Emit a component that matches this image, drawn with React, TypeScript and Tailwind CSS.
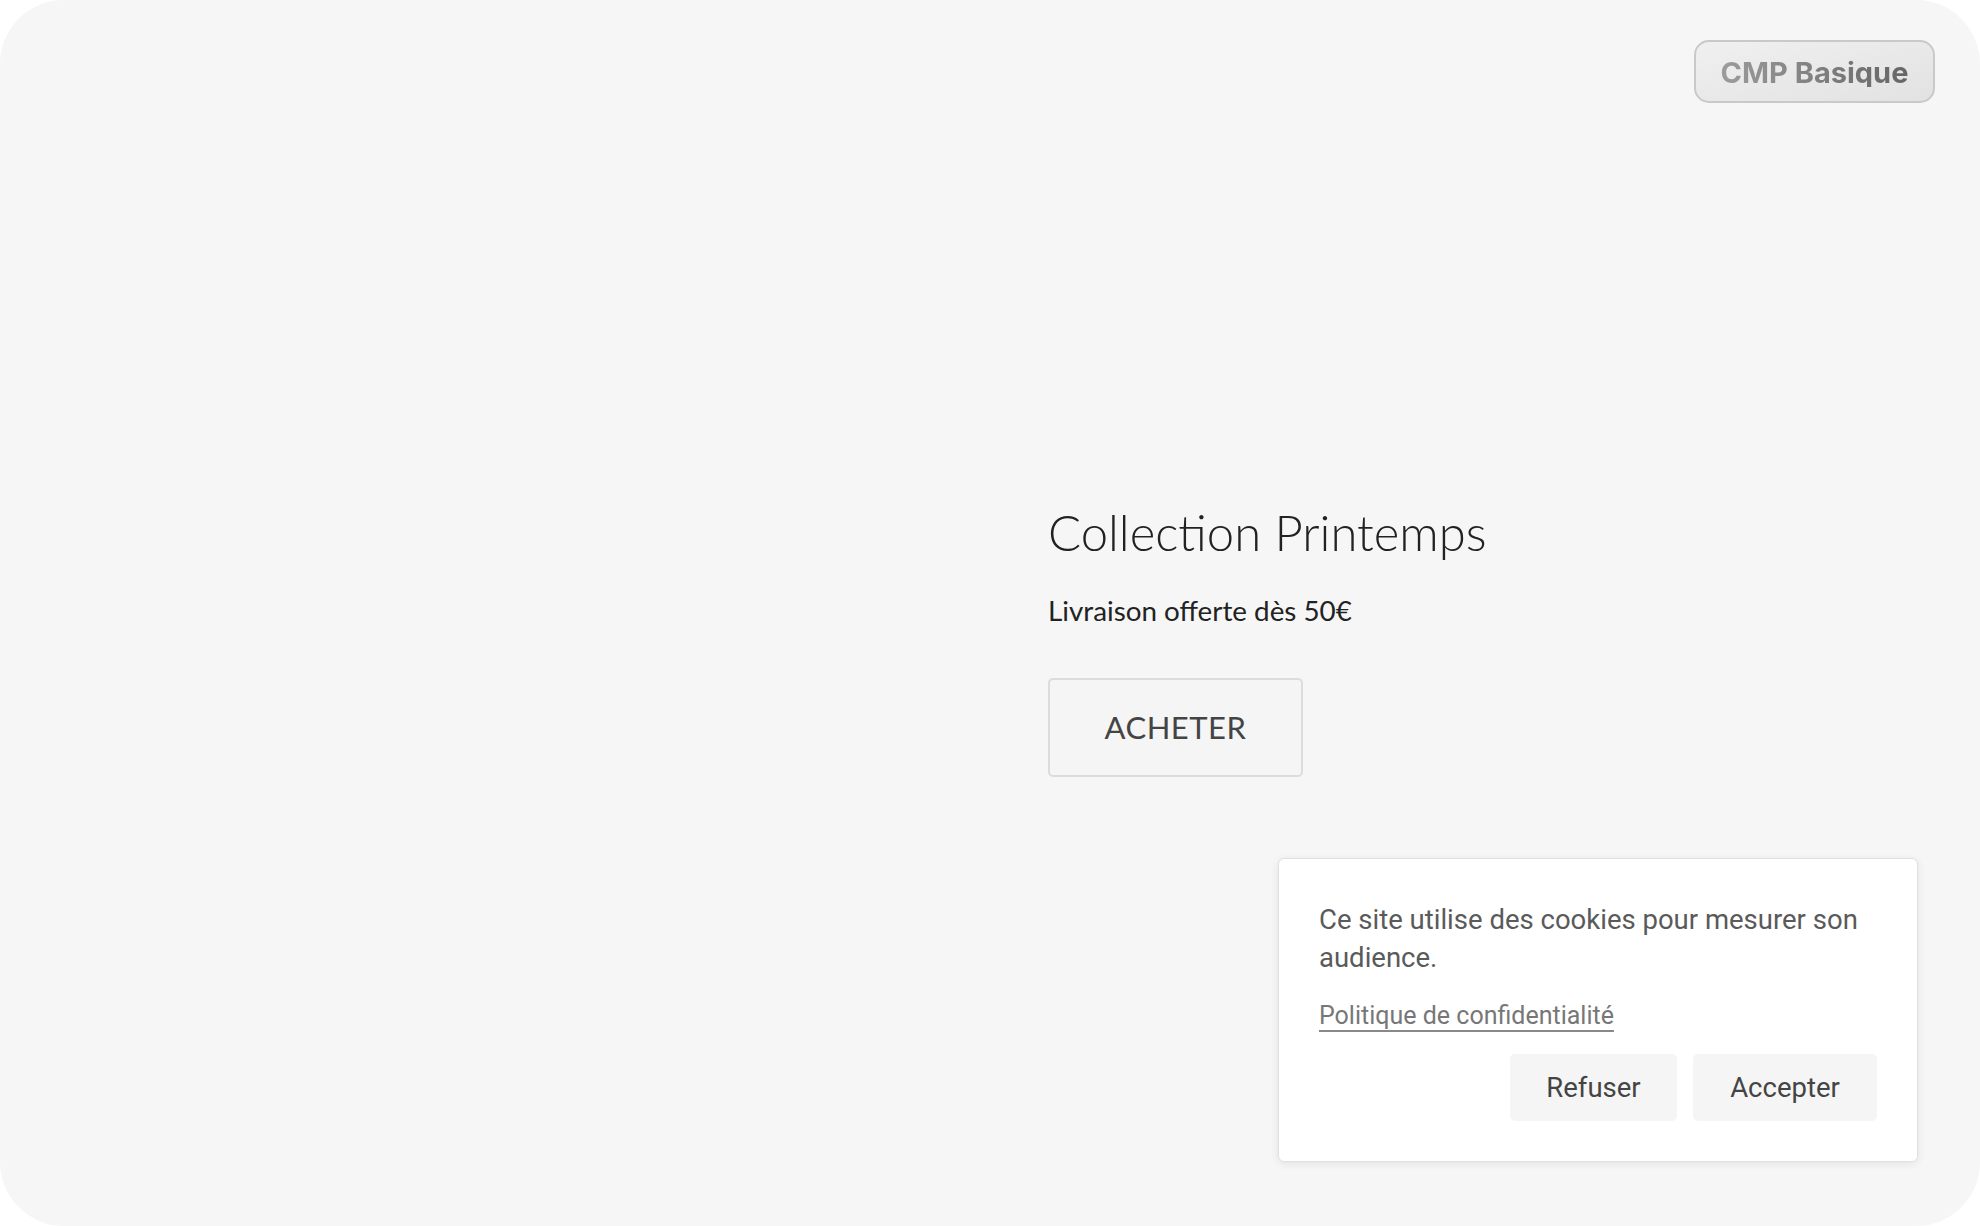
import React from "react";

export default function App() {
  return (
    <div className="w-[1980px] h-[1226px] bg-white">
      <div className="relative w-[1980px] h-[1226px] rounded-[64px] bg-[#f6f6f6] overflow-hidden">
        <div className="grid grid-cols-2 h-full">
          <div />
          <div className="flex flex-col justify-center pt-[54px] pl-[58px]">
            <h1 className="font-['Lato',sans-serif] font-light text-[49px] leading-[1.2] text-[#222]">
              Collection Printemps
            </h1>
            <p className="mt-[32px] font-['Lato',sans-serif] text-[27.8px] leading-[1.2] text-[#222]">
              Livraison offerte dès 50€
            </p>
            <div className="mt-[51px]">
              <button className="w-[255px] h-[99px] border-2 border-[#dcdcdc] rounded-[5px] bg-[#f5f5f5] font-['Lato',sans-serif] text-[31px] text-[#444] tracking-[0.5px]">
                ACHETER
              </button>
            </div>
          </div>
        </div>

        <div className="absolute top-[40px] right-[45px] w-[241px] h-[63px] rounded-[15px] border-2 border-[#c9c9c9] bg-gradient-to-br from-[#f0f0f0] to-[#e2e2e2] flex items-center justify-center">
          <span className="font-['Inter',sans-serif] font-bold text-[29px] leading-none pt-[2px] bg-gradient-to-r from-[#9c9c9c] to-[#666] bg-clip-text text-transparent">
            CMP Basique
          </span>
        </div>

        <div className="absolute right-[62px] bottom-[64px] w-[640px] bg-white border border-[#e0e0e0] rounded-[6px] shadow-[0_2px_8px_rgba(0,0,0,0.08)] px-[40px] pt-[42px] pb-[40px] font-['Roboto',sans-serif]">
          <p className="text-[27.5px] leading-[38px] text-[#5a5a5a]">
            Ce site utilise des cookies pour mesurer son audience.
          </p>
          <a className="block w-fit mt-[20px] text-[25px] leading-[37px] text-[#777] underline underline-offset-[6px] decoration-[#888]">
            Politique de confidentialité
          </a>
          <div className="mt-[20px] flex justify-end gap-[16px]">
            <button className="w-[167px] h-[67px] rounded-[5px] bg-[#f5f5f5] text-[27.5px] text-[#444]">Refuser</button>
            <button className="w-[184px] h-[67px] rounded-[5px] bg-[#f5f5f5] text-[27.5px] text-[#444]">Accepter</button>
          </div>
        </div>
      </div>
    </div>
  );
}
